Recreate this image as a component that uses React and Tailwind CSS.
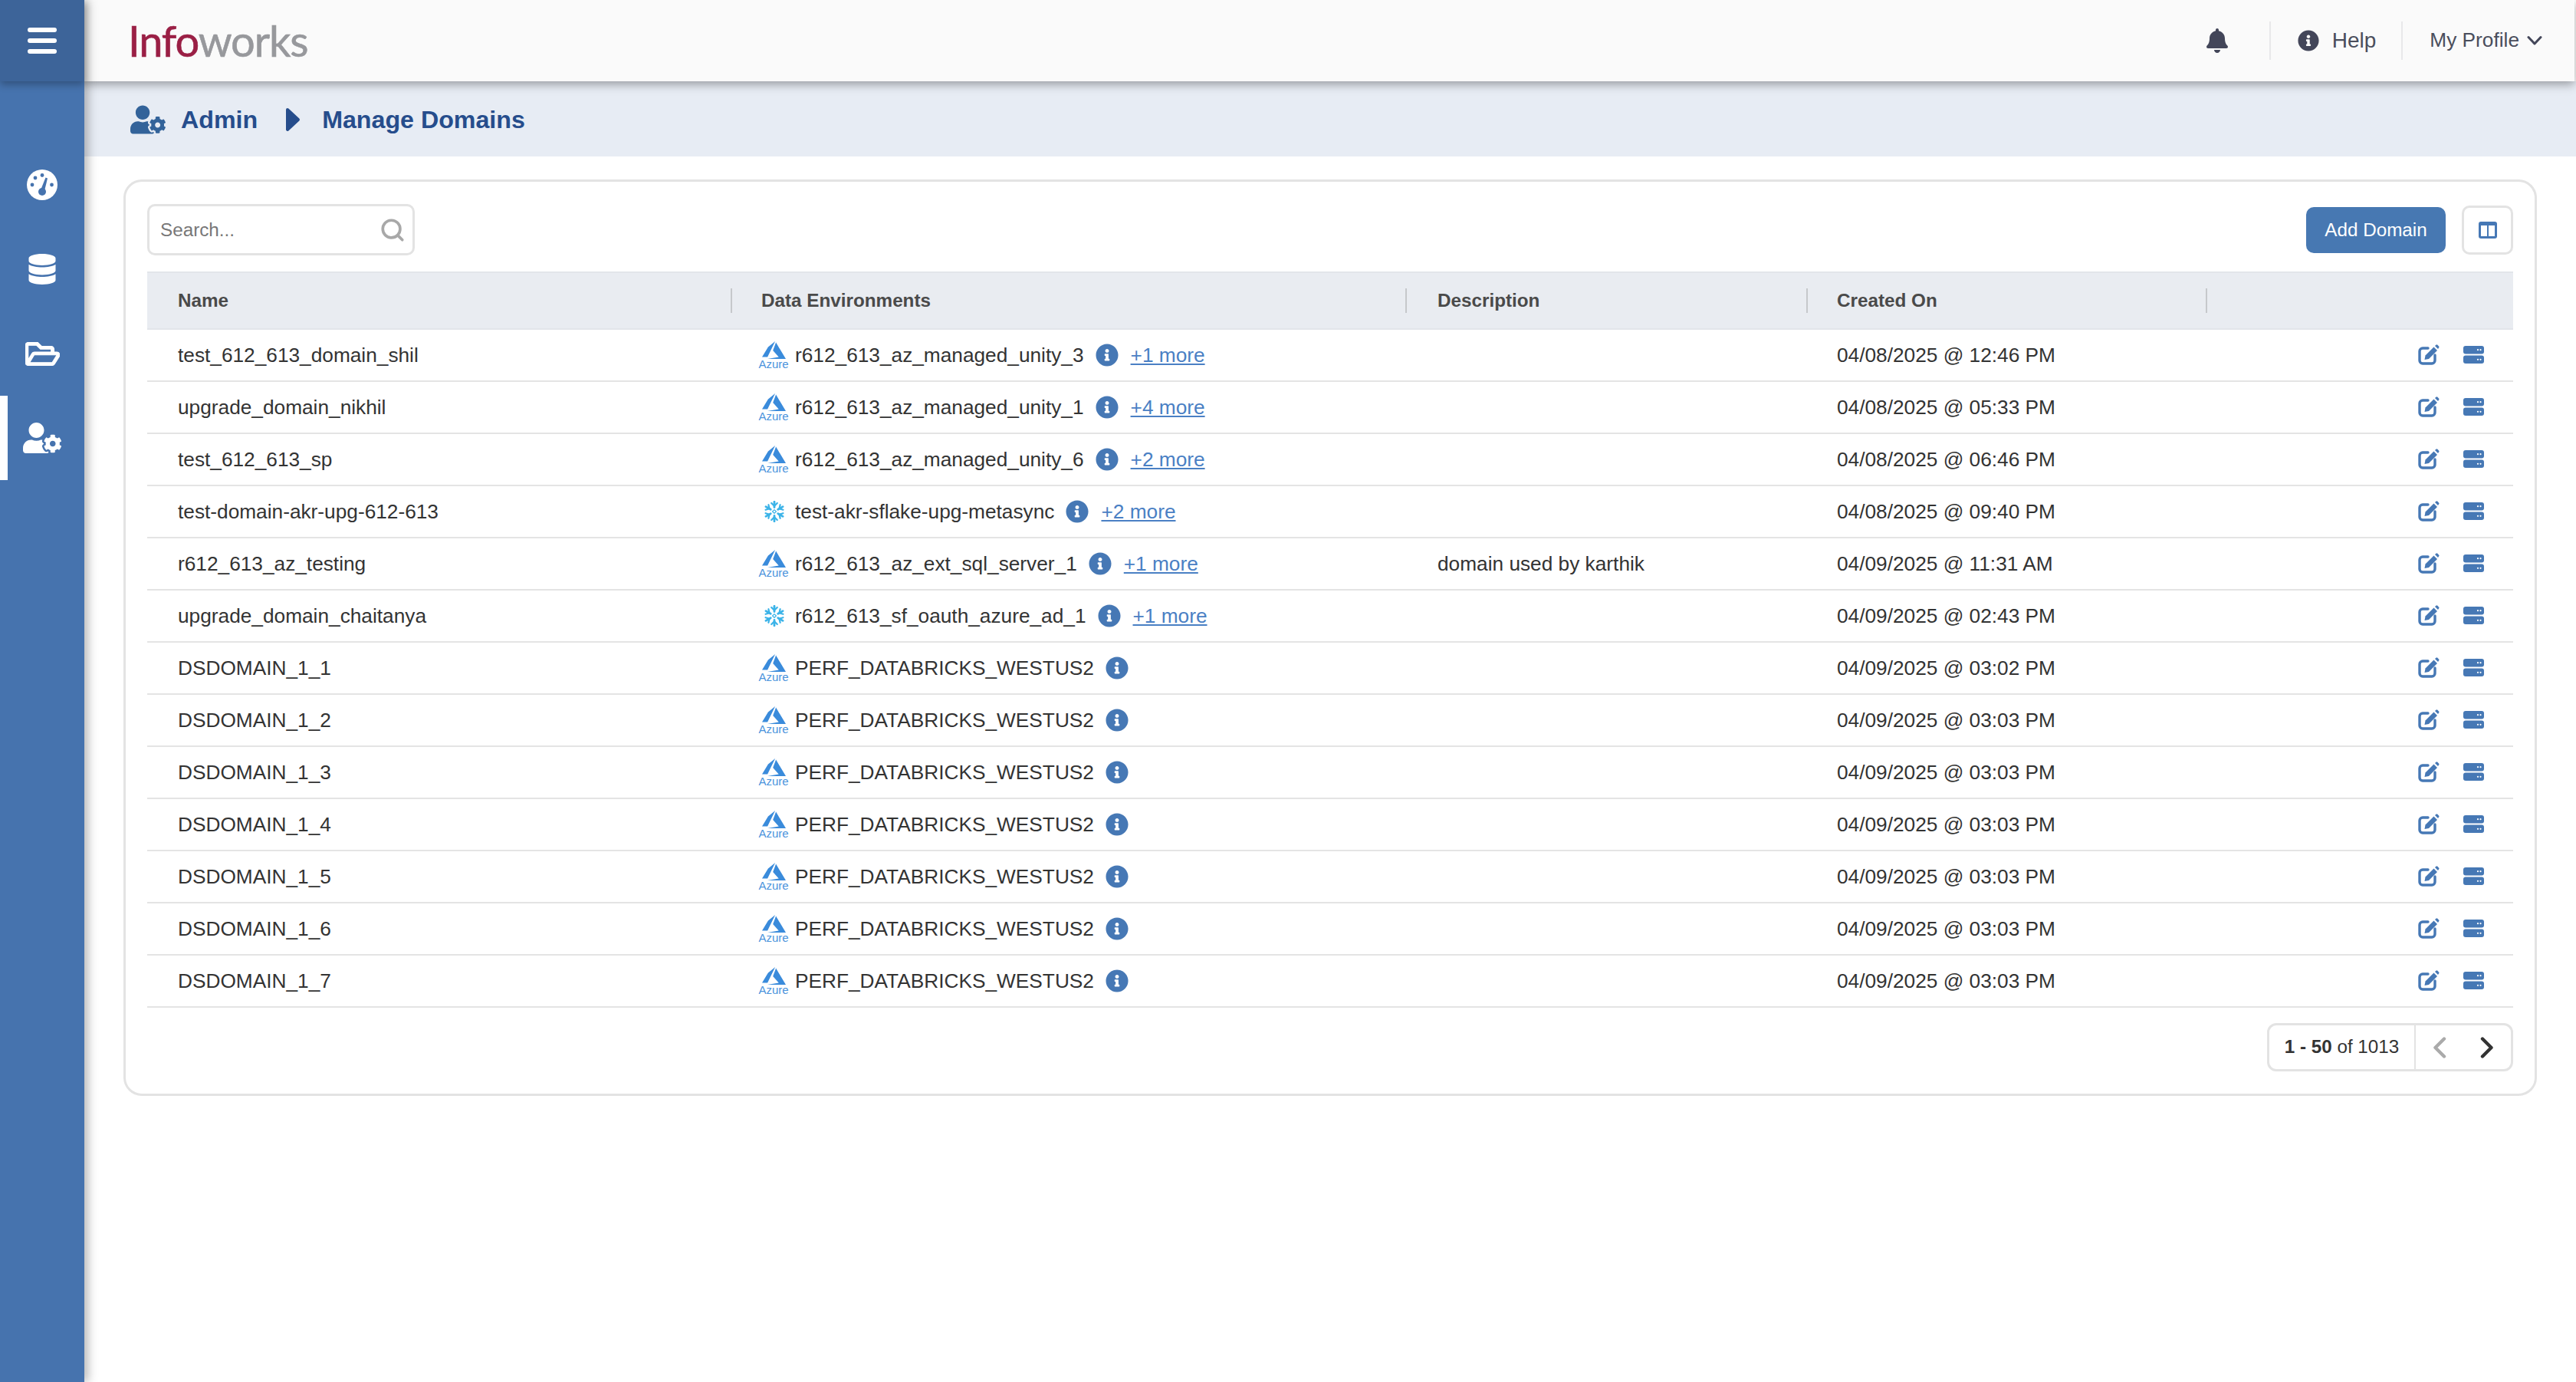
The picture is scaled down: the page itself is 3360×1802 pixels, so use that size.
import React from "react";
import { FaBell, FaInfoCircle, FaDatabase, FaRegFolderOpen, FaUserCog } from "react-icons/fa";
import { Search } from "lucide-react";

function Gauge() {
  return (
    <svg width="40" height="40" viewBox="0 0 40 40">
      <circle cx="20" cy="20" r="20" fill="#fff" />
      <g fill="#4673ae">
        <circle cx="11" cy="11" r="2.4" />
        <circle cx="20" cy="7.5" r="2.4" />
        <circle cx="7" cy="20" r="2.4" />
        <circle cx="32.5" cy="20" r="2.4" />
        <circle cx="20" cy="29" r="5" />
        <path d="M17.5 28 L24.5 10.5 L27 11.5 L22.5 30 Z" />
      </g>
    </svg>
  );
}

function Azure() {
  return (
    <div className="flex w-[32px] shrink-0 flex-col items-center">
      <svg width="31" height="23" viewBox="0 2.7 24 18.6" preserveAspectRatio="none">
        <path fill="#3a8bdb" d="M5.483 21.3H24L14.025 4.013l-3.038 8.347 5.836 6.938L5.483 21.3zM13.23 2.7L6.105 8.677 0 19.253h5.505v.014L13.23 2.7z" />
      </svg>
      <span className="mt-[1px] text-[15px] leading-[12px] text-[#4a93dc]">Azure</span>
    </div>
  );
}

function Snowflake() {
  const rot = [0, 60, 120, 180, 240, 300];
  return (
    <div className="flex w-[32px] shrink-0 justify-center pl-[2px]">
      <svg width="28" height="28" viewBox="-14 -14 28 28">
        <g stroke="#3bb3e8" strokeWidth="2.8" strokeLinecap="round" strokeLinejoin="round" fill="none">
          {rot.map((r) => (
            <g key={r} transform={`rotate(${r})`}>
              <path d="M0 -5.5 V-12.8" />
              <path d="M-3.8 -11 L0 -7.4 L3.8 -11" strokeWidth="2.2" />
            </g>
          ))}
          <path d="M0 -2.4 L2.4 0 L0 2.4 L-2.4 0 Z" strokeWidth="1.2" />
        </g>
      </svg>
    </div>
  );
}

function EditIcon() {
  return (
    <svg width="28" height="27" viewBox="0 0 28 27">
      <path d="M13 5 H6 A4 4 0 0 0 2 9 V21 A4 4 0 0 0 6 25 H18 A4 4 0 0 0 22 21 V14" fill="none" stroke="#4678b5" strokeWidth="3.4" strokeLinecap="round" />
      <path d="M20.5 3.5 L25 8 L14 19 L8.5 20 L9.5 14.5 Z" fill="#4678b5" />
      <path d="M22 2 L23.4 0.8 A1.5 1.5 0 0 1 25.4 0.8 L27 2.4 A1.5 1.5 0 0 1 27 4.5 L26 6 Z" fill="#4678b5" />
    </svg>
  );
}

function ServerIcon() {
  return (
    <svg width="27" height="23" viewBox="0 0 27 23">
      <rect x="0" y="0" width="27" height="10.5" rx="3" fill="#4678b5" />
      <rect x="0" y="12.5" width="27" height="10.5" rx="3" fill="#4678b5" />
      <g fill="#fff">
        <circle cx="19" cy="5.2" r="1.1" />
        <circle cx="22.5" cy="5.2" r="1.1" />
        <circle cx="19" cy="17.8" r="1.1" />
        <circle cx="22.5" cy="17.8" r="1.1" />
      </g>
    </svg>
  );
}

const rows = [
  ["test_612_613_domain_shil", "az", "r612_613_az_managed_unity_3", "+1 more", "", "04/08/2025 @ 12:46 PM"],
  ["upgrade_domain_nikhil", "az", "r612_613_az_managed_unity_1", "+4 more", "", "04/08/2025 @ 05:33 PM"],
  ["test_612_613_sp", "az", "r612_613_az_managed_unity_6", "+2 more", "", "04/08/2025 @ 06:46 PM"],
  ["test-domain-akr-upg-612-613", "sf", "test-akr-sflake-upg-metasync", "+2 more", "", "04/08/2025 @ 09:40 PM"],
  ["r612_613_az_testing", "az", "r612_613_az_ext_sql_server_1", "+1 more", "domain used by karthik", "04/09/2025 @ 11:31 AM"],
  ["upgrade_domain_chaitanya", "sf", "r612_613_sf_oauth_azure_ad_1", "+1 more", "", "04/09/2025 @ 02:43 PM"],
  ["DSDOMAIN_1_1", "az", "PERF_DATABRICKS_WESTUS2", "", "", "04/09/2025 @ 03:02 PM"],
  ["DSDOMAIN_1_2", "az", "PERF_DATABRICKS_WESTUS2", "", "", "04/09/2025 @ 03:03 PM"],
  ["DSDOMAIN_1_3", "az", "PERF_DATABRICKS_WESTUS2", "", "", "04/09/2025 @ 03:03 PM"],
  ["DSDOMAIN_1_4", "az", "PERF_DATABRICKS_WESTUS2", "", "", "04/09/2025 @ 03:03 PM"],
  ["DSDOMAIN_1_5", "az", "PERF_DATABRICKS_WESTUS2", "", "", "04/09/2025 @ 03:03 PM"],
  ["DSDOMAIN_1_6", "az", "PERF_DATABRICKS_WESTUS2", "", "", "04/09/2025 @ 03:03 PM"],
  ["DSDOMAIN_1_7", "az", "PERF_DATABRICKS_WESTUS2", "", "", "04/09/2025 @ 03:03 PM"],
];

const grid = "grid grid-cols-[763px_880px_523px_521px_1fr]";

function HeadCell({ children, pad }) {
  return (
    <div className={`flex h-[32px] items-center border-r-2 border-[#c6c8cb] text-[24.25px] font-bold text-[#4a4a4a] ${pad}`}>
      {children}
    </div>
  );
}

export default function App() {
  return (
    <div className="flex h-[1802px] w-[3360px] overflow-hidden bg-white font-[Liberation_Sans,Arial,sans-serif] text-[26.25px] text-[#333]">
      <aside className="relative z-20 flex w-[110px] shrink-0 flex-col bg-[#4673ae] shadow-[5px_0_12px_rgba(0,0,0,0.28)]">
        <div className="flex h-[106px] flex-col items-center justify-center gap-[8px] bg-[#3d6499] shadow-[0_4px_10px_rgba(0,0,0,0.3)]">
          <span className="h-[6px] w-[38px] rounded-[3px] bg-white" />
          <span className="h-[6px] w-[38px] rounded-[3px] bg-white" />
          <span className="h-[6px] w-[38px] rounded-[3px] bg-white" />
        </div>
        <nav className="flex flex-col pt-[80px] text-white">
          <div className="flex h-[110px] items-center justify-center"><Gauge /></div>
          <div className="flex h-[110px] items-center justify-center"><FaDatabase size={40} /></div>
          <div className="flex h-[110px] items-center justify-center"><FaRegFolderOpen size={45} stroke="currentColor" strokeWidth={14} /></div>
          <div className="flex h-[110px] items-center justify-center border-l-[10px] border-white pr-[10px]"><FaUserCog size={50} /></div>
        </nav>
      </aside>

      <main className="flex min-w-0 flex-1 flex-col">
        <header className="relative z-10 mr-[2px] flex h-[106px] shrink-0 items-center bg-[#fafafa] pl-[57px] shadow-[0_4px_12px_rgba(0,0,0,0.35)]">
          <div className="flex-1 font-[Lato,sans-serif] text-[56px] leading-none tracking-[-0.02em] [-webkit-text-stroke:0.6px_currentColor]">
            <span className="text-[#9a1f45]">Info</span><span className="text-[#97989c]">works</span>
          </div>
          <FaBell size={32} className="text-[#434659]" />
          <div className="ml-[52px] h-[50px] w-[2px] bg-[#e8e8ea]" />
          <div className="flex items-center pl-[35px] pr-[33px] text-[28px] text-[#4a4e5c]">
            <FaInfoCircle size={28} className="mr-[17px] text-[#434659]" />
            <span>Help</span>
          </div>
          <div className="h-[50px] w-[2px] bg-[#e8e8ea]" />
          <div className="flex items-center pl-[35px] pr-[42px] text-[#4a4e5c]">
            <span>My Profile</span>
            <svg className="ml-[10px]" width="20" height="14" viewBox="0 0 20 14">
              <path d="M2 2.5 L10 11 L18 2.5" fill="none" stroke="#434659" strokeWidth="3" strokeLinecap="round" strokeLinejoin="round" />
            </svg>
          </div>
        </header>

        <div className="flex h-[98px] shrink-0 items-center bg-[#e7ecf4] pl-[60px] pt-[2px] text-[32.2px] font-bold text-[#264d8c]">
          <FaUserCog size={46} className="text-[#33639a]" />
          <span className="ml-[20px]">Admin</span>
          <svg className="ml-[35px]" width="22" height="32" viewBox="0 0 22 32">
            <path d="M4 3 L18 16 L4 29 Z" fill="#264d8c" stroke="#264d8c" strokeWidth="4" strokeLinejoin="round" />
          </svg>
          <span className="ml-[27px]">Manage Domains</span>
        </div>

        <div className="px-[51px] pt-[30px]">
          <section className="rounded-[24px] border-[3px] border-[#e3e3e3] px-[28px] pb-[29px] pt-[29px]">
            <div className="mb-[21px] flex h-[67px] items-center justify-between">
              <div className="flex h-[67px] w-[349px] items-center justify-between rounded-[10px] border-[3px] border-[#e3e3e3] pl-[14px] pr-[9px]">
                <span className="pt-[2px] text-[24.25px] text-[#777]">Search...</span>
                <Search size={34} strokeWidth={2.6} className="text-[#a8a8a8]" />
              </div>
              <div className="flex items-center gap-[21px]">
                <button className="flex h-[60px] w-[182px] items-center justify-center rounded-[10px] bg-[#4778b2] pt-[2px] text-[24.25px] text-white">Add Domain</button>
                <button className="flex h-[64px] w-[67px] items-center justify-center rounded-[10px] border-[3px] border-[#e3e3e3]">
                  <svg width="24" height="22" viewBox="0 0 24 22">
                    <rect width="24" height="22" rx="3" fill="#4678b5" />
                    <rect x="3" y="5" width="8" height="14" fill="#fff" />
                    <rect x="13" y="5" width="8" height="14" fill="#fff" />
                  </svg>
                </button>
              </div>
            </div>

            <div className={`${grid} h-[76px] items-center border-y-2 border-[#e2e5ea] bg-[#e9ecf1]`}>
              <HeadCell pad="pl-[40px]">Name</HeadCell>
              <HeadCell pad="pl-[38px]">Data Environments</HeadCell>
              <HeadCell pad="pl-[40px]">Description</HeadCell>
              <HeadCell pad="pl-[38px]">Created On</HeadCell>
              <div />
            </div>

            {rows.map((r) => (
              <div key={r[0]} className={`${grid} h-[68px] items-center border-b-2 border-[#e4e4e4] pr-[2px]`}>
                <div className="pl-[40px] pt-[2px]">{r[0]}</div>
                <div className="flex items-center pl-[38px]">
                  {r[1] === "az" ? <Azure /> : <Snowflake />}
                  <span className="ml-[12px] pt-[2px]">{r[2]}</span>
                  <FaInfoCircle size={30} className="ml-[15px] text-[#4678b5]" />
                  {r[3] && <a className="ml-[16px] pt-[2px] text-[#4a80c4] underline">{r[3]}</a>}
                </div>
                <div className="pl-[40px] pt-[2px]">{r[4]}</div>
                <div className="pl-[38px] pt-[2px]">{r[5]}</div>
                <div className="flex items-center justify-end gap-[31px] pb-[2px] pr-[36px]">
                  <EditIcon />
                  <ServerIcon />
                </div>
              </div>
            ))}

            <div className="mt-[20px] flex justify-end">
              <div className="flex h-[63px] w-[321px] items-stretch rounded-[12px] border-[3px] border-[#e3e3e3]">
                <div className="flex w-[191px] items-center justify-center border-r-[2px] border-[#e3e3e3] text-[24.25px]">
                  <span><b>1 - 50</b> of 1013</span>
                </div>
                <div className="flex flex-1 items-center justify-between pl-[22px] pr-[22px]">
                  <svg width="18" height="28" viewBox="0 0 18 28">
                    <path d="M15 2.5 L3.5 14 L15 25.5" fill="none" stroke="#aaa" strokeWidth="4.4" strokeLinecap="round" strokeLinejoin="round" />
                  </svg>
                  <svg width="18" height="28" viewBox="0 0 18 28">
                    <path d="M3 2.5 L14.5 14 L3 25.5" fill="none" stroke="#333" strokeWidth="4.4" strokeLinecap="round" strokeLinejoin="round" />
                  </svg>
                </div>
              </div>
            </div>
          </section>
        </div>
      </main>
    </div>
  );
}
